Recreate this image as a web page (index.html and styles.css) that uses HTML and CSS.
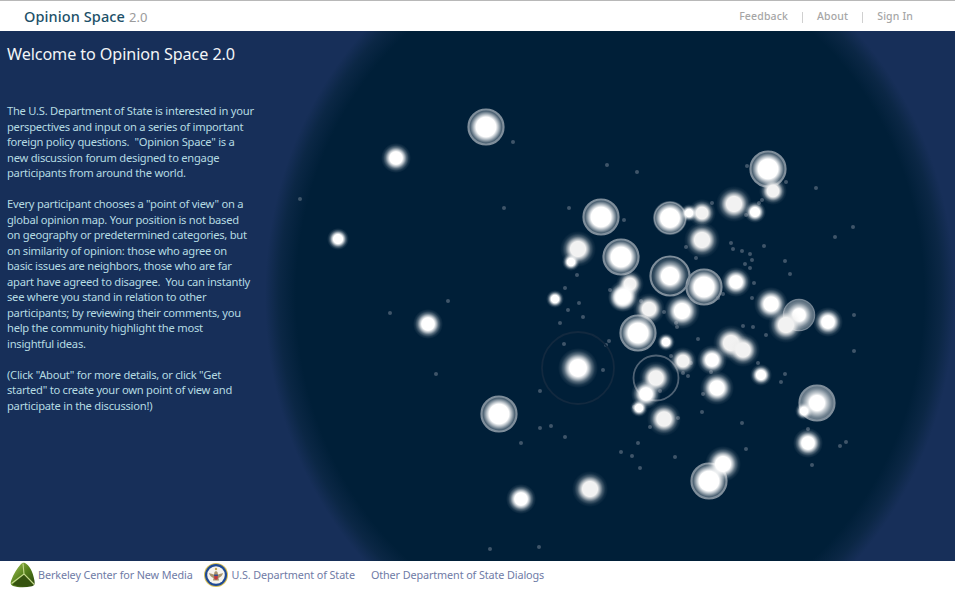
FILE: index.html
```html
<!DOCTYPE html>
<html lang="en">
<head>
<meta charset="utf-8">
<title>Opinion Space 2.0</title>
<link rel="stylesheet" href="styles.css">
</head>
<body>
<header class="topbar">
  <div class="brand"><span class="brand-name">Opinion Space</span><span class="brand-version">2.0</span></div>
  <nav class="topnav">
    <a class="topnav-link">Feedback</a><span class="topnav-sep"></span>
    <a class="topnav-link">About</a><span class="topnav-sep"></span>
    <a class="topnav-link">Sign In</a>
  </nav>
</header>
<main class="stage">
  <svg class="map" width="955" height="530" viewBox="0 31 955 530" aria-hidden="true">
    <defs>
      <radialGradient id="glow"><stop offset="0" stop-color="#fff"/><stop offset=".42" stop-color="#fff"/><stop offset=".55" stop-color="#fff" stop-opacity=".72"/><stop offset=".7" stop-color="#fff" stop-opacity=".34"/><stop offset=".85" stop-color="#fff" stop-opacity=".1"/><stop offset="1" stop-color="#fff" stop-opacity="0"/></radialGradient>
      <radialGradient id="soft"><stop offset="0" stop-color="#f2f2f2"/><stop offset=".42" stop-color="#f2f2f2"/><stop offset=".55" stop-color="#eee" stop-opacity=".7"/><stop offset=".7" stop-color="#eee" stop-opacity=".3"/><stop offset=".85" stop-color="#eee" stop-opacity=".08"/><stop offset="1" stop-color="#eee" stop-opacity="0"/></radialGradient>
      <radialGradient id="disc"><stop offset="0" stop-color="#fff"/><stop offset=".55" stop-color="#fff"/><stop offset=".7" stop-color="#fff" stop-opacity=".68"/><stop offset=".86" stop-color="#fff" stop-opacity=".33"/><stop offset="1" stop-color="#fff" stop-opacity=".2"/></radialGradient>
      <radialGradient id="discdark"><stop offset="0" stop-color="#fff"/><stop offset=".45" stop-color="#fff"/><stop offset=".62" stop-color="#fff" stop-opacity=".6"/><stop offset=".85" stop-color="#fff" stop-opacity=".2"/><stop offset="1" stop-color="#fff" stop-opacity=".12"/></radialGradient>
      <radialGradient id="discsmall"><stop offset="0" stop-color="#fff"/><stop offset=".42" stop-color="#fff"/><stop offset=".55" stop-color="#fff" stop-opacity=".78"/><stop offset=".8" stop-color="#fff" stop-opacity=".45"/><stop offset="1" stop-color="#fff" stop-opacity=".32"/></radialGradient>
      <g id="ringed"><circle r="18" fill="url(#disc)"/><circle r="17.500" class="ring"/></g>
    </defs>
    <g class="dim">
      <circle cx="513" cy="142" r="2"/><circle cx="607" cy="165" r="2"/><circle cx="637" cy="172" r="2"/><circle cx="300" cy="199" r="2"/><circle cx="504" cy="208" r="2"/><circle cx="390" cy="313" r="2"/><circle cx="448" cy="301" r="2"/><circle cx="436" cy="374" r="2"/><circle cx="490" cy="549" r="2"/><circle cx="539" cy="547" r="2"/>
      <circle cx="569" cy="208" r="2"/><circle cx="624" cy="220" r="2"/><circle cx="712" cy="203" r="2"/><circle cx="686" cy="247" r="2"/><circle cx="696" cy="258" r="2"/><circle cx="731" cy="243" r="2"/><circle cx="733" cy="249" r="2"/><circle cx="742" cy="251" r="2"/><circle cx="750" cy="254" r="2"/><circle cx="752" cy="260" r="2"/><circle cx="745" cy="264" r="2"/><circle cx="750" cy="268" r="2"/><circle cx="577" cy="275" r="2"/><circle cx="565" cy="288" r="2"/><circle cx="610" cy="290" r="2"/><circle cx="754" cy="283" r="2"/><circle cx="723" cy="294" r="2"/><circle cx="752" cy="298" r="2"/><circle cx="718" cy="298" r="2"/><circle cx="579" cy="303" r="2"/><circle cx="568" cy="310" r="2"/><circle cx="641" cy="301" r="2"/><circle cx="664" cy="312" r="2"/><circle cx="583" cy="317" r="2"/><circle cx="560" cy="323" r="2"/><circle cx="676" cy="323" r="2"/><circle cx="677" cy="327" r="2"/><circle cx="743" cy="326" r="2"/><circle cx="753" cy="327" r="2"/><circle cx="698" cy="339" r="2"/><circle cx="564" cy="344" r="2"/><circle cx="609" cy="341" r="2"/><circle cx="606" cy="345" r="2"/>
      <circle cx="603" cy="370" r="2"/><circle cx="540" cy="391" r="2"/><circle cx="671" cy="356" r="2"/><circle cx="691" cy="363" r="2"/><circle cx="683" cy="373" r="2"/><circle cx="688" cy="376" r="2"/><circle cx="711" cy="372" r="2"/><circle cx="660" cy="391" r="2"/><circle cx="703" cy="394" r="2"/><circle cx="634" cy="407" r="2"/><circle cx="702" cy="412" r="2"/><circle cx="678" cy="418" r="2"/><circle cx="650" cy="427" r="2"/><circle cx="742" cy="423" r="2"/><circle cx="758" cy="363" r="2"/><circle cx="540" cy="428" r="2"/><circle cx="551" cy="426" r="2"/><circle cx="565" cy="437" r="2"/><circle cx="521" cy="443" r="2"/><circle cx="638" cy="443" r="2"/><circle cx="621" cy="452" r="2"/><circle cx="632" cy="456" r="2"/><circle cx="675" cy="457" r="2"/><circle cx="746" cy="449" r="2"/><circle cx="640" cy="468" r="2"/>
      <circle cx="747" cy="166" r="2"/><circle cx="786" cy="182" r="2"/><circle cx="816" cy="188" r="2"/><circle cx="762" cy="200" r="2"/><circle cx="759" cy="203" r="2"/><circle cx="746" cy="215" r="2"/><circle cx="853" cy="227" r="2"/><circle cx="835" cy="237" r="2"/><circle cx="764" cy="246" r="2"/><circle cx="785" cy="261" r="2"/><circle cx="790" cy="274" r="2"/><circle cx="854" cy="315" r="2"/><circle cx="766" cy="335" r="2"/><circle cx="854" cy="351" r="2"/><circle cx="785" cy="374" r="2"/><circle cx="781" cy="382" r="2"/><circle cx="808" cy="429" r="2"/><circle cx="846" cy="442" r="2"/><circle cx="840" cy="446" r="2"/><circle cx="812" cy="465" r="2"/>
    </g>
    <circle class="ring-faint" cx="578" cy="368" r="36"/>
    <circle class="ring-thin" cx="656" cy="378" r="22.500"/>
    <use href="#ringed" x="486" y="127"/><use href="#ringed" x="768" y="169"/><use href="#ringed" x="601" y="217"/><use href="#ringed" x="621" y="257"/><use href="#ringed" x="704" y="287"/><use href="#ringed" x="638" y="333"/><use href="#ringed" x="499" y="414"/><use href="#ringed" x="709" y="481"/>
    <circle cx="670" cy="218" r="17" fill="url(#disc)"/><circle cx="670" cy="218" r="15.500" class="ring-pale"/>
    <circle cx="670" cy="276" r="19" fill="url(#discdark)"/><circle cx="670" cy="276" r="19.500" class="ring"/>
    <circle cx="817" cy="403" r="18" fill="url(#discsmall)"/><circle cx="817" cy="403" r="17.500" class="ring"/>
    <circle cx="799" cy="315" r="15" fill="url(#discsmall)"/><circle cx="799" cy="315" r="15.500" class="ring-pale"/>
    <circle cx="578" cy="368" r="20" fill="url(#glow)"/>
    <circle cx="656" cy="378" r="17" fill="url(#soft)"/>
    <circle cx="578" cy="249" r="18" fill="url(#soft)"/><circle cx="702" cy="213" r="14" fill="url(#soft)"/><circle cx="702" cy="240" r="18" fill="url(#soft)"/><circle cx="734" cy="204" r="18" fill="url(#soft)"/><circle cx="773" cy="191" r="14" fill="url(#soft)"/><circle cx="682" cy="311" r="18" fill="url(#glow)"/><circle cx="649" cy="309" r="16" fill="url(#soft)"/><circle cx="630" cy="284" r="14" fill="url(#soft)"/><circle cx="624" cy="296" r="16" fill="url(#glow)"/><circle cx="622" cy="298" r="14" fill="url(#glow)"/><circle cx="771" cy="304" r="17" fill="url(#glow)"/><circle cx="786" cy="325" r="18" fill="url(#soft)"/><circle cx="731" cy="343" r="18" fill="url(#soft)"/><circle cx="743" cy="350" r="17" fill="url(#soft)"/><circle cx="712" cy="360" r="15" fill="url(#glow)"/><circle cx="717" cy="388" r="17" fill="url(#glow)"/><circle cx="683" cy="361" r="14" fill="url(#soft)"/><circle cx="664" cy="419" r="17" fill="url(#soft)"/><circle cx="723" cy="464" r="18" fill="url(#glow)"/><circle cx="590" cy="489" r="18" fill="url(#soft)"/><circle cx="521" cy="499" r="15" fill="url(#glow)"/><circle cx="428" cy="324" r="15" fill="url(#glow)"/><circle cx="396" cy="158" r="15" fill="url(#glow)"/><circle cx="808" cy="443" r="15" fill="url(#glow)"/><circle cx="828" cy="322" r="15" fill="url(#glow)"/><circle cx="736" cy="282" r="15" fill="url(#glow)"/><circle cx="646" cy="394" r="15" fill="url(#glow)"/>
    <circle cx="338" cy="239" r="11" fill="url(#glow)"/><circle cx="689" cy="213" r="9" fill="url(#glow)"/><circle cx="755" cy="212" r="11" fill="url(#glow)"/><circle cx="571" cy="262" r="9" fill="url(#glow)"/><circle cx="555" cy="299" r="9" fill="url(#glow)"/><circle cx="666" cy="342" r="9" fill="url(#glow)"/><circle cx="761" cy="375" r="11" fill="url(#glow)"/><circle cx="639" cy="408" r="9" fill="url(#glow)"/><circle cx="804" cy="411" r="9" fill="url(#glow)"/>
  </svg>
  <section class="intro">
    <h1 class="intro-title">Welcome to Opinion Space 2.0</h1>
    <p class="intro-text">The U.S. Department of State is interested in your<br>perspectives and input on a series of important<br>foreign policy questions.&nbsp; "Opinion Space" is a<br>new discussion forum designed to engage<br>participants from around the world.</p>
    <p class="intro-text">Every participant chooses a "point of view" on a<br>global opinion map. Your position is not based<br>on geography or predetermined categories, but<br>on similarity of opinion: those who agree on<br>basic issues are neighbors, those who are far<br>apart have agreed to disagree.&nbsp; You can instantly<br>see where you stand in relation to other<br>participants; by reviewing their comments, you<br>help the community highlight the most<br>insightful ideas.</p>
    <p class="intro-text">(Click "About" for more details, or click "Get<br>started" to create your own point of view and<br>participate in the discussion!)</p>
  </section>
</main>
<footer class="footer">
  <a class="footer-link footer-berkeley">
    <svg class="logo" width="26" height="26" viewBox="0 0 26 26" aria-hidden="true">
      <defs><linearGradient id="leaf" x1="0" y1="0" x2="1" y2="1"><stop offset="0" stop-color="#a9c95a"/><stop offset=".5" stop-color="#55801c"/><stop offset="1" stop-color="#27410c"/></linearGradient></defs>
      <path d="M15 1C19 3 23 9 24.500 19C25 22 24.500 23.500 22 24.200C15 25.800 8 25.500 3 24C.5 23 .2 21 1.200 18.500C3.500 12 7 6.500 11 2C12.500 .6 13.500 .4 15 1Z" fill="url(#leaf)"/>
      <path d="M14 12L24 22.500C16 25 9 25 2.500 22.500Z" fill="#35530f"/>
      <path d="M13 1.500L14 12L24.300 22.500M14 12L1.500 21.500" fill="none" stroke="#c4d98c" stroke-width="1.100"/>
    </svg>
    <span>Berkeley Center for New Media</span>
  </a>
  <a class="footer-link footer-state">
    <svg class="logo" width="24" height="24" viewBox="0 0 24 24" aria-hidden="true">
      <circle cx="12" cy="12" r="12" fill="#d8bf55"/>
      <circle cx="12" cy="12" r="11" fill="#1f4a94"/>
      <circle cx="12" cy="12" r="8.800" fill="#f6f4ee"/>
      <path d="M5 10C7 10.500 8.500 11.200 10 11.500L10.500 9L12 8L13.500 9L14 11.500C15.500 11.200 17 10.500 19 10C18.500 12.500 16.500 14.500 14.500 15L15 17.500H9L9.500 15C7.500 14.500 5.500 12.500 5 10Z" fill="#a8946c"/>
      <path d="M10.200 12H13.800V15C13.800 16 12.700 16.600 12 16.800C11.300 16.600 10.200 16 10.200 15Z" fill="#c0393f"/>
      <rect x="10.200" y="11.500" width="3.600" height="1.500" fill="#2d4f96"/>
      <circle cx="12" cy="6" r="1.200" fill="#c2a650"/>
    </svg>
    <span>U.S. Department of State</span>
  </a>
  <a class="footer-link footer-other"><span>Other Department of State Dialogs</span></a>
</footer>
</body>
</html>
```

FILE: styles.css
```css
* { box-sizing: border-box; }
html, body { margin: 0; padding: 0; width: 955px; height: 600px; overflow: hidden; background: #fff; }
body { font-family: "Noto Sans", "Open Sans", "Liberation Sans", sans-serif; }

.topbar {
  height: 31px;
  border-top: 1px solid #b8b8b8;
  background: #fff;
  display: flex;
  align-items: center;
  justify-content: space-between;
  padding: 0 42px 0 24px;
}
.brand { display: flex; align-items: baseline; gap: 4px; }
.brand-name { font-size: 14.500px; font-weight: 500; color: #1c5068; letter-spacing: .1px; }
.brand-version { font-size: 13px; color: #9b9b9b; }
.topnav { display: flex; align-items: center; }
.topnav-link { font-size: 10.500px; font-weight: 500; color: #a6a6a6; letter-spacing: .15px; }
.topnav-sep { width: 1px; height: 11px; margin: 2px 14px 0 14px; background: #d0d0d0; }

.stage {
  position: relative;
  height: 530px;
  overflow: hidden;
  background: radial-gradient(ellipse 345px 378px at 610px 265px, #001f38 0, #001f38 91%, #0b2745 96%, #172f59 100%);
  background-color: #172f59;
}
.map { position: absolute; left: 0; top: 0; display: block; }
.dim circle { fill: #3f5569; }
.ring { fill: none; stroke: #7f8e9b; stroke-width: 2.200; }
.ring-pale { fill: none; stroke: #9aa6b0; stroke-width: 1.500; opacity: .75; }
.ring-thin { fill: none; stroke: #4f6274; stroke-width: 1.800; }
.ring-faint { fill: none; stroke: #12293f; stroke-width: 1.800; }

.intro { position: relative; width: 262px; padding: 12px 0 0 7px; }
.intro-title { margin: 0 0 38px; font-size: 16.200px; line-height: 22px; font-weight: 400; color: #f2f5f7; letter-spacing: -.1px; white-space: nowrap; }
.intro-text { margin: 0 0 15.500px; font-size: 11.200px; line-height: 15.500px; color: #b5dbe2; letter-spacing: -.26px; white-space: nowrap; }

.footer {
  height: 39px;
  background: #fff;
  display: flex;
  align-items: flex-start;
  padding: 1px 0 0 10px;
  font-size: 10.800px;
  color: #6f7ba6;
  letter-spacing: -.1px;
}
.footer-link { display: flex; align-items: center; height: 26px; white-space: nowrap; }
.footer-link span { margin-top: -1px; }
.logo { display: block; flex: none; }
.footer-berkeley { gap: 2px; }
.footer-state { margin-left: 11px; gap: 4px; }
.footer-other { margin-left: 16px; }
```
